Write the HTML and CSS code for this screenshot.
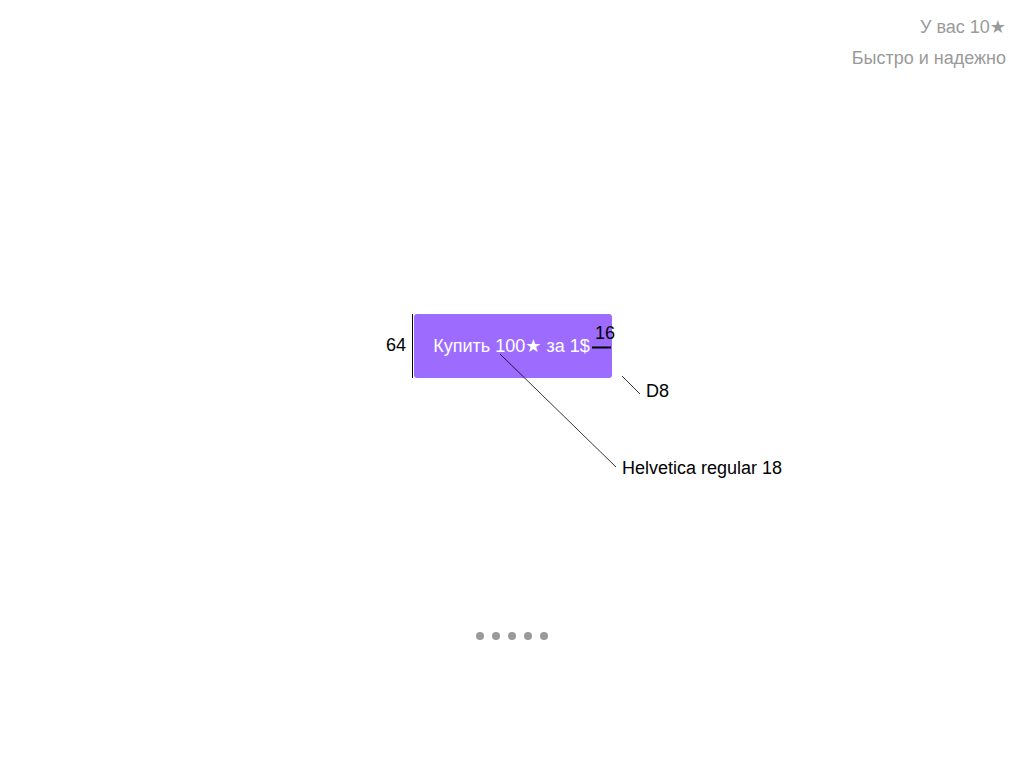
FILE: index.html
```html
<!DOCTYPE html>
<html lang="ru">
<head>
<meta charset="utf-8">
<title>Покупка звёзд</title>
<link rel="stylesheet" href="styles.css">
</head>
<body>
<div class="page">
  <header class="header">
    <div class="balance">У вас 10★</div>
    <div class="tagline">Быстро и надежно</div>
  </header>
  <main class="stage">
    <button class="buy">Купить 100★ за 1$</button>
  </main>
  <nav class="dots">
    <span class="dot"></span><span class="dot"></span><span class="dot"></span><span class="dot"></span><span class="dot"></span>
  </nav>

  <div class="annotations">
    <svg class="lines" width="1024" height="768" viewBox="0 0 1024 768">
      <line x1="412.5" y1="314" x2="412.5" y2="378" stroke="#000" stroke-width="1"/>
      <line x1="592" y1="347.5" x2="611" y2="347.5" stroke="#000" stroke-width="2"/>
      <line x1="622" y1="376" x2="640" y2="394" stroke="#000" stroke-width="0.8"/>
      <line x1="500" y1="354" x2="616" y2="467" stroke="#000" stroke-width="0.8"/>
    </svg>
    <span class="note note-64">64</span>
    <span class="note note-16">16</span>
    <span class="note note-d8">D8</span>
    <span class="note note-font">Helvetica regular 18</span>
  </div>
</div>
</body>
</html>
```

FILE: styles.css
```css
html, body {
  margin: 0;
  padding: 0;
  background: #fff;
}

.page {
  position: relative;
  width: 1024px;
  height: 768px;
  display: flex;
  flex-direction: column;
  font-family: "Liberation Sans", Arial, "DejaVu Sans", sans-serif;
  overflow: hidden;
}

.header {
  display: flex;
  flex-direction: column;
  align-items: flex-end;
  padding: 12px 18px 0 0;
  color: #9a9a9a;
  font-size: 18px;
  line-height: 31px;
}

.stage {
  display: flex;
  justify-content: center;
  padding-top: 240px;
  padding-left: 1px;
}

.buy {
  width: 198px;
  height: 64px;
  border: none;
  border-radius: 3px;
  background: #9d6cff;
  color: #fff;
  font-family: "Liberation Sans", Arial, "DejaVu Sans", sans-serif;
  font-size: 18px;
  padding: 0 2px 0 0;
  margin: 0;
}

.dots {
  display: flex;
  justify-content: center;
  gap: 8px;
  margin-top: 254px;
}

.dot {
  width: 8px;
  height: 8px;
  border-radius: 50%;
  background: #999;
}

.annotations {
  position: absolute;
  inset: 0;
  pointer-events: none;
}

.lines {
  position: absolute;
  left: 0;
  top: 0;
}

.note {
  position: absolute;
  color: #000;
  font-size: 18px;
  line-height: 20px;
  white-space: nowrap;
}

.note-64 { left: 386px; top: 335px; }
.note-16 { left: 595px; top: 323px; }
.note-d8 { left: 646px; top: 381px; }
.note-font { left: 622px; top: 458px; }
```
